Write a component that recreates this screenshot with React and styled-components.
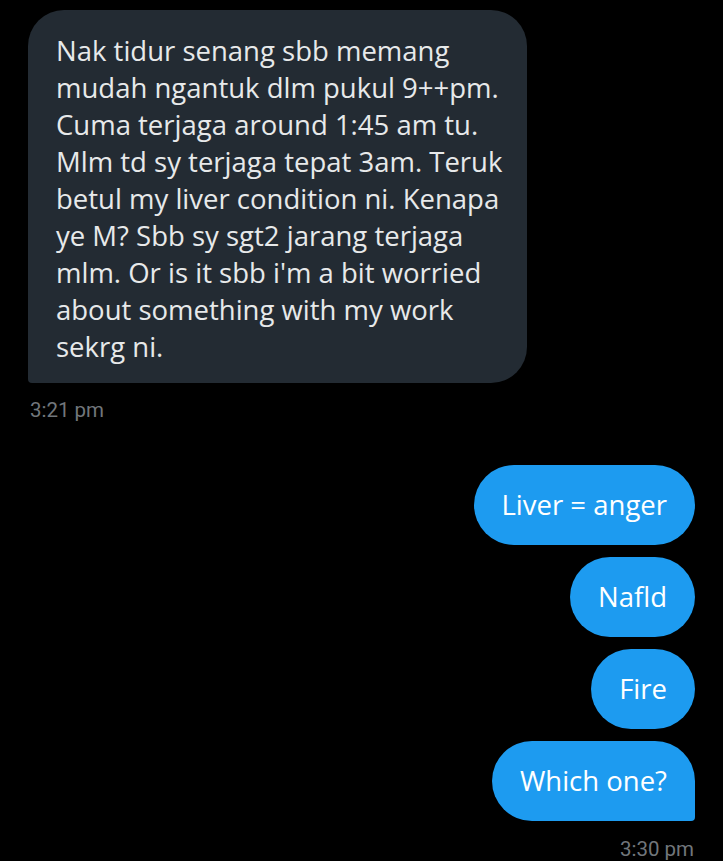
import React from "react";
import styled, { createGlobalStyle } from "styled-components";

const Global = createGlobalStyle`
  html, body { margin: 0; padding: 0; background: #000; }
  body { font-family: "Open Sans", "Noto Sans", sans-serif; }
`;

const Thread = styled.div`
  display: flex;
  flex-direction: column;
  padding: 10px 28px 0 28px;
  min-height: 861px;
  box-sizing: border-box;
`;

const Group = styled.div`
  display: flex;
  flex-direction: column;
  align-items: ${(p) => (p.$mine ? "flex-end" : "flex-start")};
  gap: 12px;
  margin-top: ${(p) => p.$top || 0}px;
`;

const Bubble = styled.div`
  box-sizing: border-box;
  padding: 22px 28px;
  font-size: 27.5px;
  line-height: 36px;
  white-space: pre;
  color: #ffffff;
  background: #1d9bf0;
  border-radius: ${(p) => (p.$tail ? "40px 40px 4px 40px" : "40px")};
`;

const Received = styled.div`
  box-sizing: border-box;
  width: 499px;
  padding: 22px 28px 18px 28px;
  font-size: 27.5px;
  line-height: 37px;
  white-space: pre;
  color: #e7e9ea;
  background: #232b33;
  border-radius: 36px 36px 36px 4px;
`;

const Time = styled.div`
  font-family: Roboto, "Liberation Sans", sans-serif;
  font-size: 20.5px;
  line-height: 24px;
  color: #71767b;
  margin-top: ${(p) => p.$top}px;
  padding: 0 ${(p) => (p.$mine ? "1px" : "0")} 0 ${(p) => (p.$mine ? "0" : "2px")};
  align-self: ${(p) => (p.$mine ? "flex-end" : "flex-start")};
`;

const received = `Nak tidur senang sbb memang
mudah ngantuk dlm pukul 9++pm.
Cuma terjaga around 1:45 am tu.
Mlm td sy terjaga tepat 3am. Teruk
betul my liver condition ni. Kenapa
ye M? Sbb sy sgt2 jarang terjaga
mlm. Or is it sbb i'm a bit worried
about something with my work
sekrg ni.`;

export default function App() {
  return (
    <>
      <Global />
      <Thread>
        <Group>
          <Received>{received}</Received>
        </Group>
        <Time $top={15}>3:21 pm</Time>
        <Group $mine $top={43}>
          <Bubble>Liver = anger</Bubble>
          <Bubble>Nafld</Bubble>
          <Bubble>Fire</Bubble>
          <Bubble $tail>Which one?</Bubble>
        </Group>
        <Time $mine $top={16}>3:30 pm</Time>
      </Thread>
    </>
  );
}
